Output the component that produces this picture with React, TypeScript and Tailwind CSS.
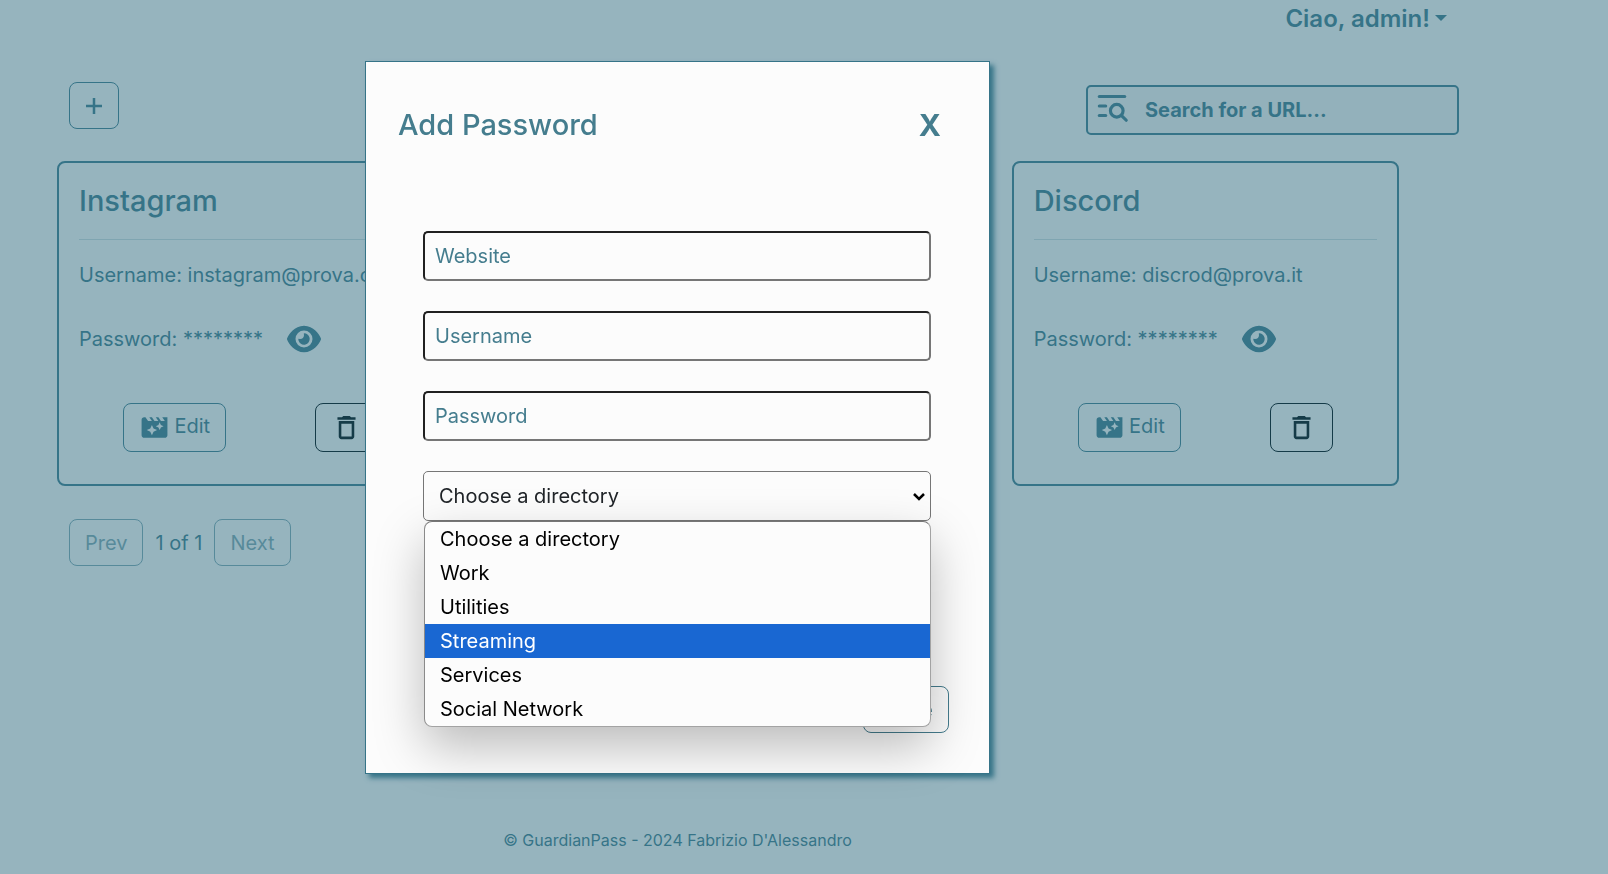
import { useState } from "react";
import { FaEye } from "react-icons/fa6";
import { MdDeleteOutline, MdMovieFilter } from "react-icons/md";
import { TbListSearch } from "react-icons/tb";

const directories = ["Choose a directory", "Work", "Utilities", "Streaming", "Services", "Social Network"];

const fields = [
  { id: "website", label: "Website", type: "text" },
  { id: "username", label: "Username", type: "text" },
  { id: "password", label: "Password", type: "password" },
];

function PasswordCard({ site, username, className }: { site: string; username: string; className: string }) {
  return (
    <article className={`w-[calc(100%-90px)] rounded-lg border-2 border-[#367488] px-5 pt-5 pb-8 ${className}`}>
      <h2 className="text-[29px] leading-9 font-medium">{site}</h2>
      <hr className="mt-5 border-[#7fa5b1]" />
      <p className="mt-5 whitespace-nowrap leading-[30px]">Username: {username}</p>
      <div className="mt-8 flex items-center leading-[30px]">
        <span className="whitespace-nowrap">Password: ********</span>
        <button type="button" aria-label="Show password" className="ml-6">
          <FaEye className="size-[34px]" />
        </button>
      </div>
      <div className="mt-[47px] flex justify-around">
        <button type="button" className="flex h-[49px] items-center gap-1 rounded-lg border border-[#367488] px-[15px]">
          <MdMovieFilter className="size-[31px]" />
          <span className="pb-1">Edit</span>
        </button>
        <button
          type="button"
          aria-label="Delete"
          className="flex h-[49px] items-center rounded-lg border border-[#153b48] px-[15px] text-[#153b48]"
        >
          <MdDeleteOutline className="size-[31px]" />
        </button>
      </div>
    </article>
  );
}

function DirectorySelect() {
  const [value, setValue] = useState(directories[0]);
  return (
    <div className="relative text-black">
      <select
        aria-label="Directory"
        value={value}
        onChange={(e) => setValue(e.target.value)}
        className="block h-[50px] w-full appearance-none rounded-[5px] border border-[#767676] bg-[#fcfcfc] px-[15px] text-[#212529]"
      >
        {directories.map((d) => (
          <option key={d}>{d}</option>
        ))}
      </select>
      <svg viewBox="0 0 12 8" className="pointer-events-none absolute top-[22px] right-[6px] h-2 w-3" fill="none" stroke="black" strokeWidth="2.5">
        <path d="M1 1l5 5 5-5" />
      </svg>
      <ul className="absolute top-full right-0 left-px overflow-hidden rounded-lg border border-[#a3a3a3] border-t-[#767676] border-l-[#8a8a8a] bg-[#fcfcfc] shadow-[0_20px_50px_rgba(0,0,0,0.26)]">
        {directories.map((d) => (
          <li key={d} className={`h-[34px] px-[15px] leading-[34px] ${d === "Streaming" ? "bg-[#1967d2] text-white" : ""}`}>
            {d}
          </li>
        ))}
      </ul>
    </div>
  );
}

function AddPasswordModal() {
  return (
    <div className="fixed inset-0 flex items-start justify-center pt-[61px] pr-[253px]">
      <section
        role="dialog"
        aria-labelledby="modal-title"
        className="w-full max-w-[625px] border border-[#367488] bg-[#fcfcfc] pb-10 text-[#457d8e] shadow-[4px_4px_5px_#367488]"
      >
        <header className="flex items-center justify-between pt-[45px] pr-12 pl-8 leading-9">
          <h1 id="modal-title" className="text-[29px] font-medium">
            Add Password
          </h1>
          <button type="button" aria-label="Close" className="text-[30px] font-bold">
            X
          </button>
        </header>
        <form className="mt-[88px] flex flex-col gap-[30px] pr-[58px] pl-[57px]">
          {fields.map((f) => (
            <input
              key={f.id}
              id={f.id}
              type={f.type}
              aria-label={f.label}
              placeholder={f.label}
              className="h-[50px] w-full rounded-[5px] border-2 border-t-[#212121] border-r-[#767676] border-b-[#767676] border-l-[#212121] px-[10px] placeholder:text-[#457d8e]"
            />
          ))}
          <DirectorySelect />
        </form>
        <div className="mt-[165px] flex justify-end pr-10">
          <button type="button" className="h-[47px] rounded-lg border border-[#457d8e] px-[15px]">
            Close
          </button>
        </div>
      </section>
    </div>
  );
}

export default function App() {
  return (
    <div className="min-h-screen overflow-x-hidden bg-[#96b4be] font-['Inter',sans-serif] text-[20px] text-[#367488]">
      <nav className="flex justify-end pt-1 pr-[161px]">
        <button type="button" className="flex items-center gap-[5px] text-2xl leading-[30px] font-semibold">
          Ciao, admin!
          <svg viewBox="0 0 12 6" className="mb-[2px] h-[6px] w-3" fill="currentColor">
            <path d="M0 0h12l-6 6z" />
          </svg>
        </button>
      </nav>
      <div className="mt-12 flex items-start justify-between pr-[149px] pl-[69px]">
        <button type="button" aria-label="Add password" className="flex h-[47px] w-[50px] items-center justify-center rounded-lg border border-[#367488]">
          <svg viewBox="0 0 16 16" className="size-4" stroke="currentColor" strokeWidth="2.5">
            <path d="M8 0v16M0 8h16" />
          </svg>
        </button>
        <label className="mt-[3px] flex h-[50px] w-[373px] items-center rounded-[5px] border-2 border-[#367488] bg-[#93b1bb]">
          <TbListSearch className="mb-2 ml-[5px] size-[38px] shrink-0" />
          <input
            type="search"
            aria-label="Search"
            placeholder="Search for a URL..."
            className="ml-[14px] min-w-0 flex-1 bg-transparent font-bold placeholder:text-[#367488]"
          />
        </label>
      </div>
      <main className="mt-[26px] grid grid-cols-3 pr-[119px] pl-[57px]">
        <PasswordCard site="Instagram" username="instagram@prova.com" className="col-start-1" />
        <PasswordCard site="Discord" username="discrod@prova.it" className="col-start-3" />
      </main>
      <div className="mt-[33px] flex items-center gap-3 pl-[69px]">
        <button type="button" disabled className="h-[47px] rounded-lg border border-[#367488] px-[15px] opacity-65">
          Prev
        </button>
        <span>1 of 1</span>
        <button type="button" disabled className="h-[47px] rounded-lg border border-[#367488] px-[15px] opacity-65">
          Next
        </button>
      </div>
      <footer className="mt-[262px] pr-[253px] text-center text-base">© GuardianPass - 2024 Fabrizio D'Alessandro</footer>
      <AddPasswordModal />
    </div>
  );
}
